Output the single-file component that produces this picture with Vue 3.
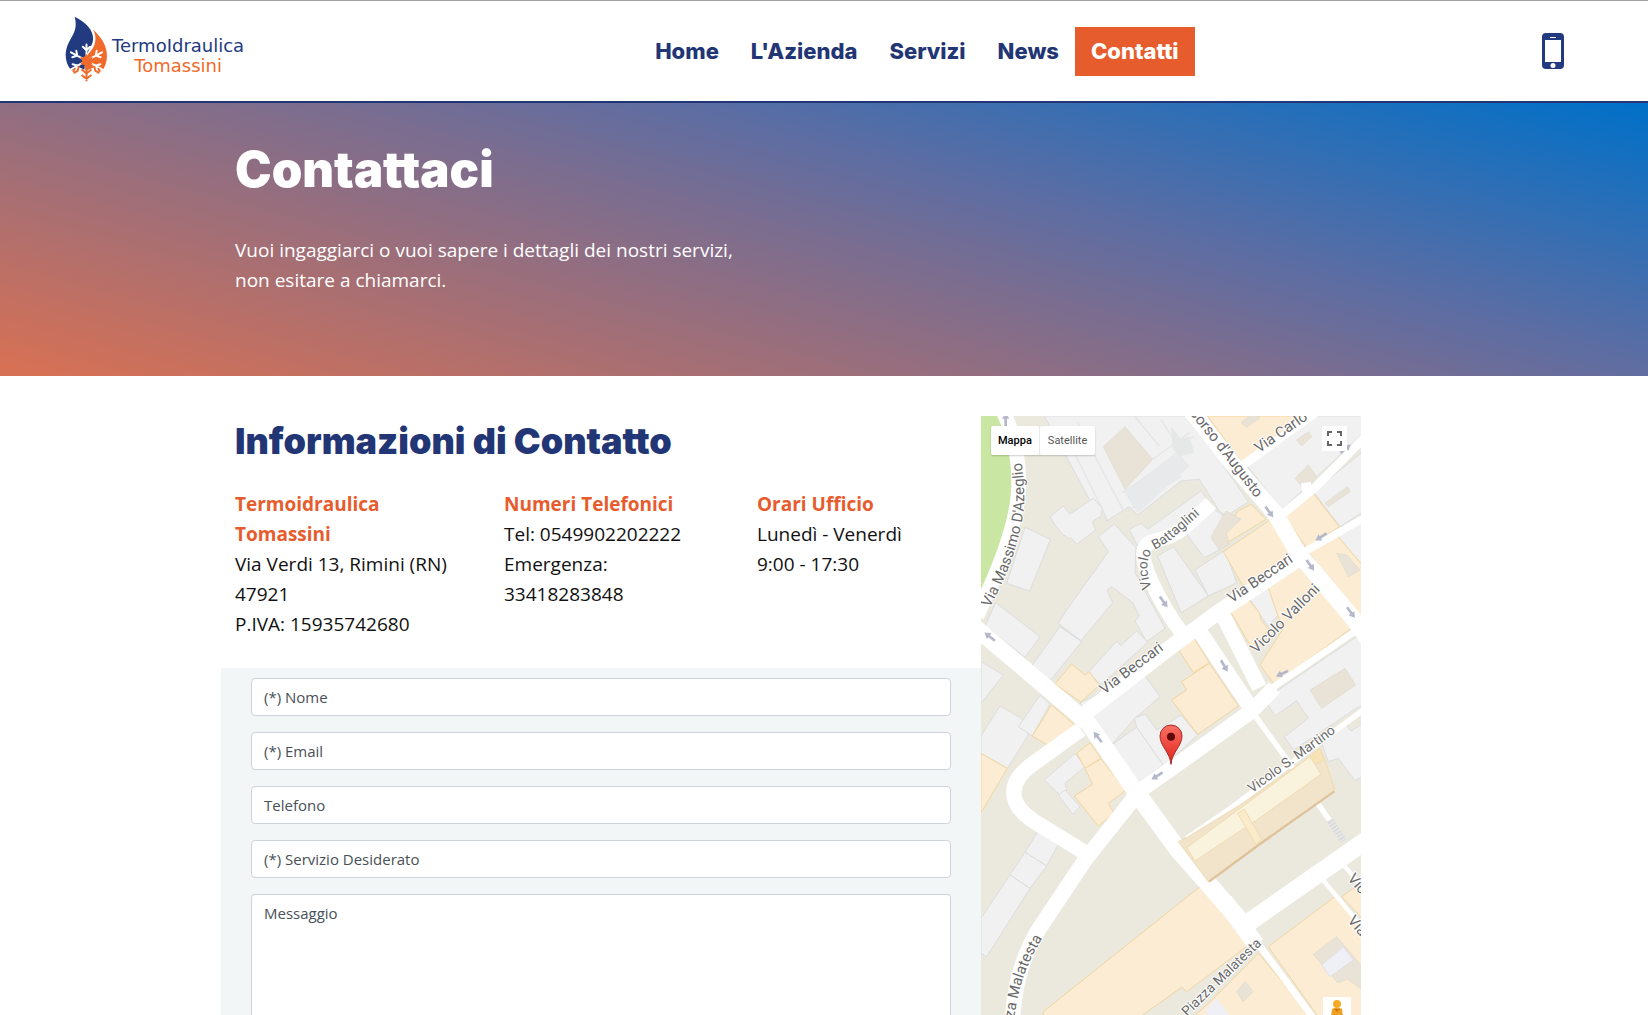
<script setup>
const navItems = [
  { label: 'Home' },
  { label: "L'Azienda" },
  { label: 'Servizi' },
  { label: 'News' },
  { label: 'Contatti', active: true },
]

const infoColumns = [
  { title: ['Termoidraulica', 'Tomassini'], lines: ['Via Verdi 13, Rimini (RN)', '47921', 'P.IVA: 15935742680'] },
  { title: ['Numeri Telefonici'], lines: ['Tel: 0549902202222', 'Emergenza:', '33418283848'] },
  { title: ['Orari Ufficio'], lines: ['Lunedì - Venerdì', '9:00 - 17:30'] },
]

const fields = [
  { name: 'nome', type: 'text', hint: '(*) Nome' },
  { name: 'email', type: 'email', hint: '(*) Email' },
  { name: 'telefono', type: 'tel', hint: 'Telefono' },
  { name: 'servizio', type: 'text', hint: '(*) Servizio Desiderato' },
]

// Map geometry, three units per CSS pixel
const greyBlocks = [
  '190,0 625,0 802,257 737,300 715,285 655,190 600,195 470,297 445,272 377,315 360,267 325,250',
  '207,302 247,270 267,294 337,247 364,277 360,300 334,317 344,342 287,385 272,367 262,367 244,354 222,327',
  '132,334 208,370 146,525 77,502',
  '352,362 400,324 465,395 462,470 552,637 497,677 462,615 475,600 455,560 392,512 378,522 395,560 300,674 232,622 257,582 382,407',
  '237,632 302,677 207,794 149,754',
  '44,560 177,662 132,724 12,630',
  '0,737 67,777 0,862',
  '57,870 122,907 142,957 79,1057 0,1012 0,960',
  '177,838 207,864 154,960 112,932',
  '322,770 407,675 419,689 467,645 500,679 360,806',
  '297,860 487,772 537,842 462,907 392,987',
  '392,987 467,934 547,1047 469,1102',
  '460,907 492,894 527,942 600,897 650,957 565,1035 547,1047 467,934',
  '282,1012 312,1052 252,1102 257,1122 237,1137 190,1092',
  '252,1122 297,1172 275,1195 232,1137',
  '170,1247 232,1285 197,1350 132,1309',
  '132,1309 197,1350 147,1417 87,1377',
  '87,1377 147,1417 17,1622 0,1612 0,1507',
  '445,340 480,322 500,340 660,225 700,280 735,305 700,345 715,402 670,425 610,345 530,400 470,390',
  '642,462 732,402 767,500 682,540',
  '530,420 577,392 682,540 600,590',
  '800,540 857,502 905,582 860,630',
  '797,147 1000,0 1142,0 1142,55 902,282',
  '997,227 1142,110 1142,290 1077,332',
  '1067,357 1142,318 1142,445',
  '850,850 1142,652 1142,867 937,1002 910,962 982,907 947,854 882,900',
  '1022,982 1097,927 1110,945 1142,925 1142,1082 1122,1094 1072,1027 1042,1037',
]
const orangeBlocks = [
  '212,867 279,925 227,1004 154,960',
  '0,1012 79,1057 0,1190',
  '272,744 312,777 324,767 355,807 300,858 222,804',
  '580,682 629,650 685,740 637,770',
  '602,797 685,742 772,870 650,955 572,852 617,822',
  '327,980 360,1027 312,1057 287,1012',
  '312,1057 360,1029 435,1122 382,1162 399,1192 352,1230 280,1140 335,1105',
  '667,1404 810,1582 617,1727 602,1714 480,1800 187,1800 187,1787',
  '735,352 770,285 810,265 855,310 742,378',
  '727,407 867,312 942,432 787,512',
  '742,577 797,542 835,590 840,612 862,640 815,700',
  '857,502 952,440 1020,510 1125,627 880,804 837,747 905,640',
  '680,0 985,0 782,140',
  '907,297 997,232 1075,332 977,395',
  '982,407 1067,357 1142,445 1142,625',
  '862,1592 1062,1442 1142,1540 1142,1800 1010,1800',
  '1082,1442 1142,1400 1142,1505',
  '832,1612 990,1800 640,1800 690,1755 740,1705',
]
const courts = [
  '367,92 432,32 515,130 432,220',
  '780,20 812,-5 837,5 797,34',
  '947,72 982,47 992,62 962,90',
  '942,187 982,147 1007,182 975,225',
  '1032,262 1100,212 1107,227 1042,272',
  '1067,412 1097,417 1137,462 1102,482',
  '987,822 1092,757 1124,807 1022,877',
  '997,1615 1067,1562 1142,1650 1142,1720 1100,1690 1070,1700',
  '767,1727 792,1697 817,1727 787,1757',
  '700,345 735,285 780,310 735,352 745,385 715,402 690,365',
]
const roads = [
  { d: 'M68-10Q125 110 110 250Q95 370 8 555L-12 600', w: 44 },
  { d: 'M-20 632L207 824L322 922L457 1117', w: 50 },
  { d: 'M457 1117L590 1300L672 1392L802 1542', w: 54 },
  { d: 'M730 1455L825 1585', w: 52 },
  { d: 'M818 1565L1000 1810', w: 20 },
  { d: 'M480 1120L312 1332L172 1542Q105 1650 94 1810', w: 46 },
  { d: 'M300 940L150 1048Q80 1100 105 1160Q120 1195 182 1230L325 1318', w: 46 },
  { d: 'M315 890L560 700L712 588L960 425', w: 46 },
  { d: 'M620-30L752 140L882 292L952 412L1112 602L1170 680', w: 50 },
  { d: 'M782 150L1010-15', w: 26 },
  { d: 'M900 298L1002 215L1160 55', w: 26 },
  { d: 'M980 235L975 200', w: 30 },
  { d: 'M975 405L1160 300', w: 22 },
  { d: 'M690 262L610 335Q570 365 520 375Q475 385 492 445Q515 520 580 620L620 675', w: 44 },
  { d: 'M645 630L802 865', w: 46 },
  { d: 'M722 590L835 815', w: 46 },
  { d: 'M470 1128L565 1062L812 885L880 815', w: 46 },
  { d: 'M860 825L1160 620', w: 20 },
  { d: 'M817 892L922 1037L1045 1212', w: 16 },
  { d: 'M617 1267L742 1182L1160 872', w: 16 },
  { d: 'M785 1532L1160 1270', w: 54 },
  { d: 'M1022 1387L1128 1515', w: 13 },
  { d: 'M1078 1335L1150 1420', w: 13 },
]
const arrows = [
  { x: 26, y: 662, r: 218 }, { x: 350, y: 963, r: 232 }, { x: 528, y: 1080, r: 148 },
  { x: 548, y: 558, r: 55 }, { x: 865, y: 288, r: 54 }, { x: 988, y: 448, r: 54 },
  { x: 730, y: 750, r: 60 }, { x: 903, y: 773, r: 155 }, { x: 1020, y: 363, r: 148 },
  { x: 1110, y: 590, r: 54 }, { x: 1094, y: 98, r: -40 }, { x: 74, y: 10, r: 270 },
]
</script>

<template>
  <div class="page">
    <header class="site-header">
      <a class="brand" href="#">
        <svg class="brand-mark" viewBox="46 48 130 200" aria-hidden="true">
          <path fill="#223a80" d="M75 50C112 68 132 92 131 118C130 142 112 150 108 184L104 214L66 214C45 192 43 158 56 131C67 108 86 88 75 50Z" />
          <path fill="#f06a2b" d="M130 88C158 114 174 140 173 171C172 190 167 204 158 214L106 214L112 170C118 158 136 148 138 121C139 108 136 98 130 88Z" />
          <g fill="none" stroke="#fff" stroke-width="6" stroke-linecap="round">
            <path d="M111 183V134M100 141L111 152L122 141M111 183L64 158M68 173L83 168L80 153M111 183L158 158M154 173L139 168L142 153M111 183L64 210M69 194L83 198L80 212M111 183L158 210M153 194L139 198L142 212" />
          </g>
          <path fill="#fff" d="M60 216L86 202L111 214L136 202L162 216V248H60Z" />
          <path fill="#f06a2b" d="M111 163L119 173L130 173L124 184L130 195L119 196L111 207L103 196L92 195L98 184L92 173L103 173Z" />
          <g fill="none" stroke="#f06a2b" stroke-width="6">
            <path d="M111 200V246M96 210L111 222L126 210M96 227L111 238L126 227M76 206L70 217M88 200L84 214L72 221M146 206L152 217M134 200L138 214L150 221" />
          </g>
        </svg>
        <span class="brand-name"><span>TermoIdraulica</span><span class="brand-second">Tomassini</span></span>
      </a>
      <nav class="main-nav">
        <a v-for="item in navItems" :key="item.label" href="#" :class="{ active: item.active }">{{ item.label }}</a>
      </nav>
      <a class="phone" href="#" aria-label="Chiama">
        <svg viewBox="0 0 22 36" width="22" height="36" aria-hidden="true">
          <rect width="22" height="36" rx="4" fill="#223a80" />
          <rect x="3" y="7" width="16" height="22" fill="#fff" />
          <rect x="8" y="4" width="6" height="1" fill="#fff" />
          <circle cx="11" cy="32.500" r="2.500" fill="#fff" />
        </svg>
      </a>
    </header>

    <section class="hero">
      <div class="hero-text">
        <h1>Contattaci</h1>
        <p>Vuoi ingaggiarci o vuoi sapere i dettagli dei nostri servizi,<br>non esitare a chiamarci.</p>
      </div>
    </section>

    <main class="content">
      <div class="details">
        <h2>Informazioni di Contatto</h2>
        <div class="info">
          <div v-for="col in infoColumns" :key="col.title[0]">
            <h3><template v-for="(t, i) in col.title" :key="t"><br v-if="i">{{ t }}</template></h3>
            <p><template v-for="(l, i) in col.lines" :key="l"><br v-if="i">{{ l }}</template></p>
          </div>
        </div>
        <form class="contact-form">
          <input v-for="f in fields" :key="f.name" :name="f.name" :type="f.type" :placeholder="f.hint" :aria-label="f.hint">
          <textarea name="messaggio" placeholder="Messaggio" aria-label="Messaggio"></textarea>
        </form>
      </div>

      <div class="map">
        <svg class="map-canvas" viewBox="0 0 1140 1797" preserveAspectRatio="xMidYMin slice">
          <defs>
            <linearGradient id="pin" x1="0" y1="0" x2="0" y2="1"><stop offset="0" stop-color="#fb7064" /><stop offset="1" stop-color="#e0241b" /></linearGradient>
            <path id="azeglio" d="M26 576Q125 390 130 250Q130 150 100 20" />
            <path id="battaglini" d="M512 516C492 460 498 424 514 404Q550 388 580 362L690 266" />
            <path id="augusto" d="M622-12L732 126L860 294" />
            <path id="malatesta" d="M88 1893Q105 1728 140 1650Q165 1590 240 1480" />
          </defs>
          <rect width="1140" height="1797" fill="#ebe8de" />
          <path d="M0 0H52Q100 130 92 250Q85 380 0 540Z" fill="#c9e6a2" />
          <g fill="#f1f1f1" stroke="#dcdddd" stroke-width="3"><polygon v-for="p in greyBlocks" :key="p" :points="p" /></g>
          <g fill="#fbecd3" stroke="#f1d6a0" stroke-width="3"><polygon v-for="p in orangeBlocks" :key="p" :points="p" /></g>
          <g fill="#e8e3d6" stroke="#dedacb" stroke-width="2"><polygon v-for="p in courts" :key="p" :points="p" /></g>
          <path d="M245 40L380 312M290 20L425 280M425 230L600 110M440 285L600 180M515 130L625 50M540 10L590 90L640 60M460 0L535 90" fill="none" stroke="#e4e5e6" stroke-width="4" />
          <path d="M432 230L590 105L625 150L470 292Z" fill="#e8e9ea" />
          <path d="M570 30L600 70L625 60L640 110L600 120L575 100Z" fill="#e6e7e7" />
          <polygon points="1022,1647 1087,1592 1117,1632 1047,1682" fill="#eef0f5" stroke="#d9dbe0" stroke-width="2" />
          <polygon points="672,1785 707,1747 745,1797 680,1797" fill="#eef0f5" />
          <g fill="none" stroke="#fff" stroke-linejoin="round"><path v-for="r in roads" :key="r.d" :d="r.d" :stroke-width="r.w" /></g>
          <path d="M1048 1215L1088 1275" stroke="#d6d9e5" stroke-width="20" stroke-dasharray="5 5" />
          <g stroke-width="3" stroke="#f0dcb0">
            <polygon points="592,1277 617,1265 780,1165 987,1022 1017,997 1032,1032 1060,1115 1060,1127 837,1282 682,1397" fill="#f1e4cb" />
            <polygon points="617,1295 780,1175 987,1022 1020,1075 830,1210 642,1335" fill="#f9f2dc" />
            <polygon points="770,1192 790,1180 842,1270 825,1285" fill="#faebcb" />
            <polygon points="985,1022 1015,997 1030,1030 1007,1045" fill="#f8e3b7" />
          </g>
          <path d="M684 1397L837 1284L1060 1126" stroke="#dfc29a" stroke-width="7" fill="none" />
          <g fill="#b5b8cb"><path v-for="a in arrows" :key="a.x" :transform="`translate(${a.x} ${a.y}) rotate(${a.r})`" d="M-20-4H2V-11L20 0L2 11V4H-20Z" /></g>
          <g class="streets">
            <text><textPath href="#azeglio">Via Massimo D'Azeglio</textPath></text>
            <text class="small"><textPath href="#battaglini">Vicolo Battaglini</textPath></text>
            <text><textPath href="#augusto">Corso d'Augusto</textPath></text>
            <text><textPath href="#malatesta">Piazza Malatesta</textPath></text>
            <text transform="translate(834 112) rotate(-35)">Via Carlo</text>
            <text transform="translate(752 562) rotate(-34)">Via Beccari</text>
            <text transform="translate(370 836) rotate(-37)">Via Beccari</text>
            <text transform="translate(826 714) rotate(-45)">Vicolo Valloni</text>
            <text class="small" transform="translate(813 1132) rotate(-36)">Vicolo S. Martino</text>
            <text class="small" transform="translate(618 1802) rotate(-44)">Piazza Malatesta</text>
            <text transform="translate(1098 1388) rotate(50)">Vicolo</text>
            <text transform="translate(1098 1514) rotate(50)">Via</text>
          </g>
          <path d="M570 1045C568 1010 537 990 537 960A33 33 0 0 1 603 960C603 990 572 1010 570 1045Z" fill="url(#pin)" stroke="#a52a22" stroke-width="3" />
          <circle cx="570" cy="962" r="12" fill="#5c0a0a" />
        </svg>
        <div class="map-type"><button type="button" class="selected">Mappa</button><button type="button">Satellite</button></div>
        <button type="button" class="fullscreen" aria-label="Schermo intero">
          <svg viewBox="0 0 15 15" width="15" height="15"><path d="M1 5V1H5M10 1H14V5M14 10V14H10M5 14H1V10" fill="none" stroke="#666" stroke-width="2" /></svg>
        </button>
        <button type="button" class="pegman" aria-label="Street View">
          <svg viewBox="0 0 14 28" width="14" height="28"><path d="M2 9Q7 6 12 9L13 17H11L10 27H4L3 17H1Z" fill="#f0a01e" /><circle cx="7" cy="4" r="4" fill="#f5ab28" /><path d="M4 9H10L7 12Z" fill="#c9780c" /></svg>
        </button>
      </div>
    </main>
  </div>
</template>

<style>
body { margin: 0; background: #fff; }
</style>

<style scoped>
* { box-sizing: border-box; }
.page {
  --navy: #223575;
  --orange: #e75c2d;
  display: flex;
  flex-direction: column;
  min-height: 100vh;
  font-family: "Open Sans", "Noto Sans", sans-serif;
  color: #111;
}
.site-header {
  display: grid;
  grid-template-columns: minmax(0, 640fr) auto minmax(0, 454fr);
  align-items: center;
  height: 103px;
  border-top: 1px solid #a2a2a2;
  border-bottom: 2px solid var(--navy);
}
.brand { display: flex; align-items: center; gap: 4px; padding: 0 0 4px 65px; text-decoration: none; }
.brand-mark { width: 43px; height: 66px; }
.brand-name {
  display: flex;
  flex-direction: column;
  align-items: center;
  padding-top: 14px;
  font: 18px/20px "DejaVu Sans", sans-serif;
  color: #223a80;
}
.brand-second { color: #f06a2b; }
.main-nav { display: flex; }
.main-nav a {
  padding: 0 16px;
  font: 800 22px/49px Inter, sans-serif;
  color: var(--navy);
  text-decoration: none;
}
.main-nav a.active { background: var(--orange); color: #fff; }
.phone { justify-self: end; display: flex; padding-right: 84px; }
.hero, .content {
  display: grid;
  grid-template-columns: minmax(0, 221fr) minmax(0, 760px) 380px minmax(0, 287fr);
}
.hero { height: 273px; background: linear-gradient(15deg, #d97153, #7a6d90 50%, #5c6da3 64%, #0070c8); color: #fff; }
.hero-text { grid-column: 2; padding: 37px 14px 0; }
h1 { margin: 0 0 35px; font: 900 49px/60px Inter, sans-serif; }
p { margin: 0; font-size: 19px; line-height: 30px; }
.content { flex: 1; padding-top: 40px; }
.details { grid-column: 2; display: flex; flex-direction: column; }
h2 { margin: 0; padding: 0 14px; font: 900 36px/50px Inter, sans-serif; color: var(--navy); }
.info { display: grid; grid-template-columns: 269px 253px 1fr; padding: 23px 0 29px 14px; }
h3 { margin: 0; font-size: 19px; line-height: 30px; font-weight: 700; color: var(--orange); }
.contact-form {
  flex: 1;
  display: flex;
  flex-direction: column;
  gap: 16px;
  padding: 10px 30px 0;
  background: #f3f6f7;
}
.contact-form input, .contact-form textarea {
  width: 100%;
  padding: 6px 12px;
  border: 1px solid #ced4da;
  border-radius: 4px;
  background: #fff;
  font: 15px/24px "Open Sans", sans-serif;
  color: #495057;
}
.contact-form input { height: 38px; }
.contact-form textarea { flex: 1; min-height: 120px; border-bottom: 0; border-radius: 4px 4px 0 0; resize: none; display: block; }
::placeholder { color: #495057; opacity: 1; }
.map { grid-column: 3; position: relative; overflow: hidden; }
.map-canvas { position: absolute; inset: 0; width: 100%; height: 100%; }
.streets { font-family: Roboto, sans-serif; font-size: 45px; fill: #696969; stroke: #fff; stroke-width: 6px; paint-order: stroke; }
.small { font-size: 41px; }
.map button { border: 0; background: #fff; padding: 0; font: 11px/29px Roboto, sans-serif; color: #565656; }
.map-type { position: absolute; top: 10px; left: 10px; display: flex; border-radius: 2px; box-shadow: 0 1px 2px rgba(0, 0, 0, .2); }
.map .map-type button { padding: 0 8px; border-radius: 2px; }
.map .map-type .selected { padding: 0 7px; font-weight: 500; color: #000; border-right: 1px solid #e8e8e8; }
.map .fullscreen { position: absolute; top: 10px; right: 14px; width: 25px; height: 25px; display: grid; place-items: center; }
.map .pegman { position: absolute; bottom: -10px; right: 10px; width: 28px; height: 28px; padding-top: 3px; display: grid; justify-items: center; align-items: start; overflow: hidden; }
</style>
